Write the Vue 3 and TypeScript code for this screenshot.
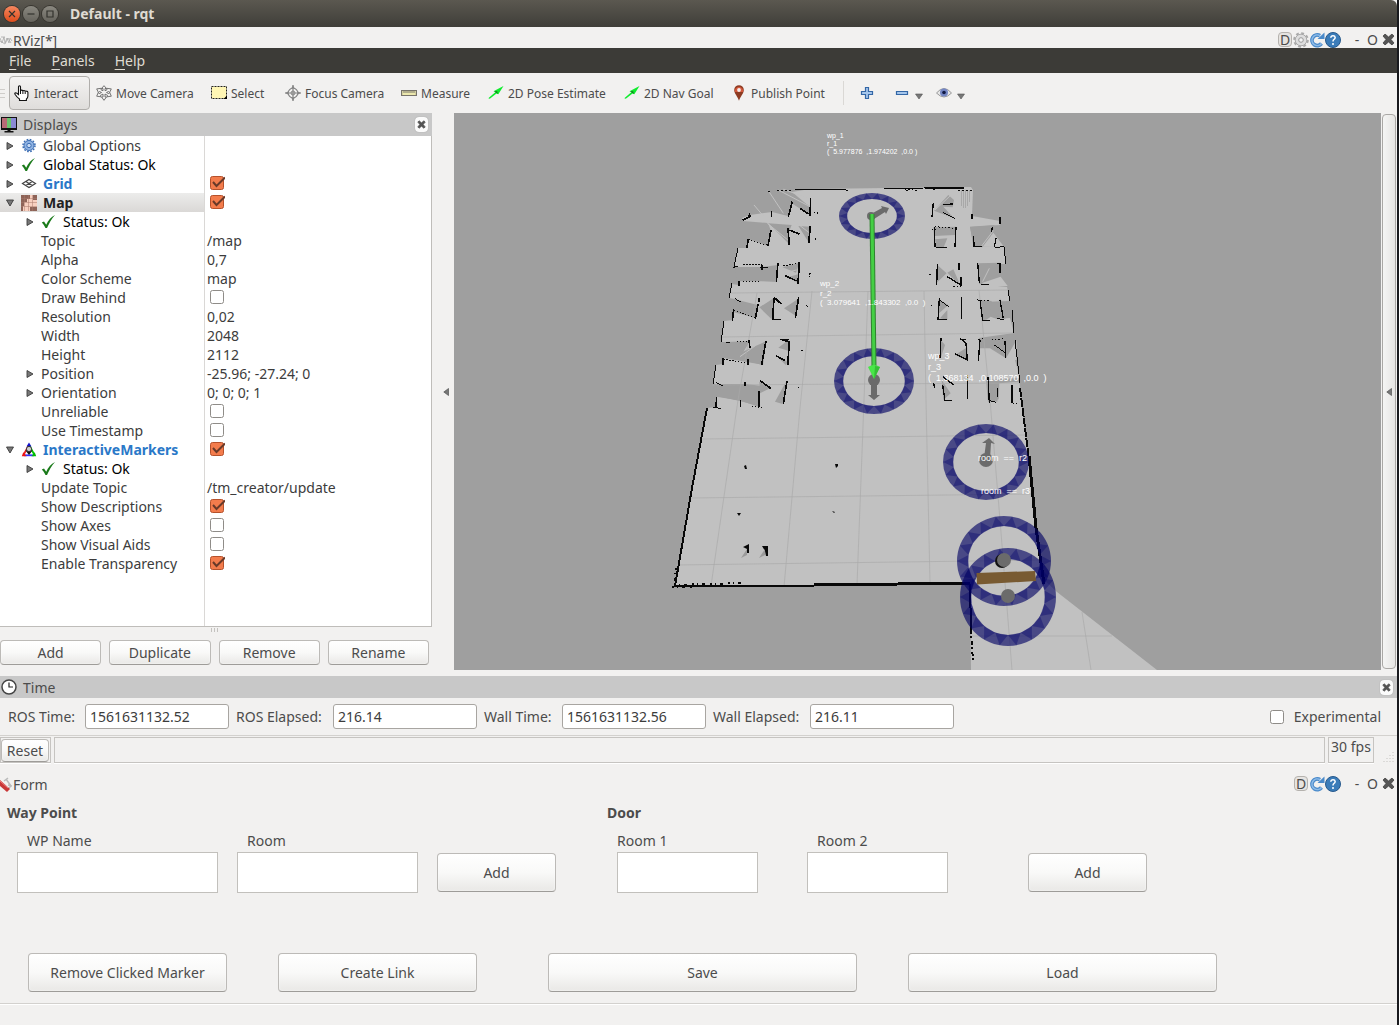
<script setup lang="ts">
import { ref } from 'vue'

interface Row {
  name: string
  depth: number
  arrow?: 'open' | 'closed'
  icon?: string
  tone?: string
  value?: string
  checked?: boolean
  selected?: boolean
}

const rows = ref<Row[]>([
  { name: 'Global Options', depth: 0, arrow: 'closed', icon: 'gear' },
  { name: 'Global Status: Ok', depth: 0, arrow: 'closed', icon: 'ok', tone: 'black' },
  { name: 'Grid', depth: 0, arrow: 'closed', icon: 'grid', tone: 'blue', checked: true },
  { name: 'Map', depth: 0, arrow: 'open', icon: 'map', tone: 'bold', checked: true, selected: true },
  { name: 'Status: Ok', depth: 1, arrow: 'closed', icon: 'ok', tone: 'black' },
  { name: 'Topic', depth: 1, value: '/map' },
  { name: 'Alpha', depth: 1, value: '0,7' },
  { name: 'Color Scheme', depth: 1, value: 'map' },
  { name: 'Draw Behind', depth: 1, checked: false },
  { name: 'Resolution', depth: 1, value: '0,02' },
  { name: 'Width', depth: 1, value: '2048' },
  { name: 'Height', depth: 1, value: '2112' },
  { name: 'Position', depth: 1, arrow: 'closed', value: '-25.96; -27.24; 0' },
  { name: 'Orientation', depth: 1, arrow: 'closed', value: '0; 0; 0; 1' },
  { name: 'Unreliable', depth: 1, checked: false },
  { name: 'Use Timestamp', depth: 1, checked: false },
  { name: 'InteractiveMarkers', depth: 0, arrow: 'open', icon: 'markers', tone: 'blue', checked: true },
  { name: 'Status: Ok', depth: 1, arrow: 'closed', icon: 'ok', tone: 'black' },
  { name: 'Update Topic', depth: 1, value: '/tm_creator/update' },
  { name: 'Show Descriptions', depth: 1, checked: true },
  { name: 'Show Axes', depth: 1, checked: false },
  { name: 'Show Visual Aids', depth: 1, checked: false },
  { name: 'Enable Transparency', depth: 1, checked: true },
])

const tools = [
  { id: 'hand', label: 'Interact' },
  { id: 'move', label: 'Move Camera' },
  { id: 'select', label: 'Select' },
  { id: 'focus', label: 'Focus Camera' },
  { id: 'measure', label: 'Measure' },
  { id: 'arrow', label: '2D Pose Estimate' },
  { id: 'arrow', label: '2D Nav Goal' },
  { id: 'pin', label: 'Publish Point' },
]

const times = [
  { id: 'ros-time', label: 'ROS Time:', value: '1561631132.52' },
  { id: 'ros-elapsed', label: 'ROS Elapsed:', value: '216.14' },
  { id: 'wall-time', label: 'Wall Time:', value: '1561631132.56' },
  { id: 'wall-elapsed', label: 'Wall Elapsed:', value: '216.11' },
]

interface Ring { cx: number; cy: number; rx: number; ry: number; ix: number; iy: number }

const ringShapes: Ring[] = [
  { cx: 872, cy: 216, rx: 33, ry: 23, ix: 25, iy: 17 },
  { cx: 874, cy: 381, rx: 40, ry: 33, ix: 31, iy: 25 },
  { cx: 986, cy: 462, rx: 43, ry: 38, ix: 33, iy: 29 },
  { cx: 1004, cy: 561, rx: 47, ry: 45, ix: 36, iy: 35 },
  { cx: 1008, cy: 597, rx: 48, ry: 49, ix: 37, iy: 38 },
]

const ellipse = (cx: number, cy: number, rx: number, ry: number) =>
  `M${cx - rx} ${cy}a${rx} ${ry} 0 1 0 ${rx * 2} 0a${rx} ${ry} 0 1 0 ${-rx * 2} 0z`

// Dark triangles with their base on the inner rim and their tip on the outer one
function wedges(r: Ring, count = 18): string {
  const at = (a: number, x: number, y: number) =>
    `${(r.cx + x * Math.cos(a)).toFixed(1)} ${(r.cy + y * Math.sin(a)).toFixed(1)}`
  let d = ''
  for (let i = 0; i < count; i++) {
    const a = (i * 2 * Math.PI) / count
    const half = Math.PI / count
    d += `M${at(a - half, r.ix, r.iy)}L${at(a + half, r.ix, r.iy)}L${at(a, r.rx, r.ry)}z`
  }
  return d
}

const rings = ringShapes.map((r) => ({
  band: ellipse(r.cx, r.cy, r.rx, r.ry) + ellipse(r.cx, r.cy, r.ix, r.iy),
  dark: wedges(r),
}))
</script>

<template>
  <svg class="defs" width="0" height="0" aria-hidden="true">
    <symbol id="i-gear" viewBox="0 0 16 16">
      <circle cx="8" cy="7.500" r="5" fill="#8fb3e3" stroke="#3c6eb4" />
      <circle cx="8" cy="7.500" r="6" fill="none" stroke="#3c6eb4" stroke-width="1.500" stroke-dasharray="1.700 1.440" />
      <circle cx="8" cy="7.500" r="2.200" fill="#c5d9f3" stroke="#3c6eb4" />
    </symbol>
    <symbol id="i-ok" viewBox="0 0 16 16">
      <path d="M.8 8.500l2.200-.9 2.200 3.200C7 6.500 10 3 14 1 10.500 5 8 9.500 6 14H4.500C3.500 12 2.300 10 .8 8.500z" fill="#1a7a1a" />
    </symbol>
    <symbol id="i-grid" viewBox="0 0 16 16">
      <path d="M8 3.500L14.500 7.500 8 11.500 1.500 7.500zM4.800 5.500l6.500 4M11.300 5.500l-6.500 4" fill="none" stroke="#444" stroke-width="1.200" />
    </symbol>
    <symbol id="i-map" viewBox="0 0 16 16">
      <path d="M0 0h16v16H0z" fill="#f8d0c0" />
      <path d="M0 0h9v4H6v3H3v4H2v5H0zM12 0h4v5h-4zM9 12h7v4H9z" fill="#8e6458" />
      <path d="M3.500 0v16M7.500 0v16M11.500 0v16M0 3.500h16M0 7.500h16M0 11.500h16" stroke="#a97a6c" stroke-opacity=".5" />
    </symbol>
    <symbol id="i-markers" viewBox="0 0 16 16">
      <path d="M8 3L3 12" stroke="#e22" stroke-width="1.800" /><path d="M8 3l5 9" stroke="#0c0" stroke-width="1.800" />
      <path d="M3 13.300h10" stroke="#33f" stroke-width="1.800" />
      <path d="M8 .5l2.500 4h-5z" fill="#11c" /><path d="M.8 14.200l1.500-4 3.200 4z" fill="#e11" /><path d="M15.200 14.200l-1.500-4-3.200 4z" fill="#0b0" />
      <path d="M4.500 8.500q3.500-1.500 7 0L8 13z" fill="#111" /><circle cx="8" cy="7" r="2.600" fill="#ccc" stroke="#222" stroke-width=".8" />
    </symbol>
    <symbol id="i-hand" viewBox="0 0 16 16">
      <path d="M4.500 9.500V1.800q0-1 1-1t1 1V6q.2-1 1.300-.9 1 .1 1 1 .3-.8 1.300-.6 1 .2 1 1 .3-.6 1.200-.4 1.600.2 1.600 1.200V11q0 2-1.500 3v1.500H5.500V14Q3 12.500 1 9.300q-.6-1.300.6-1.500 1.200 0 2.900 1.700z" fill="#fff" stroke="#111" stroke-width="1.100" />
      <path d="M6.500 6v3M8.900 6v3M11.200 6.500V9" stroke="#111" />
    </symbol>
    <symbol id="i-move" viewBox="0 0 16 16">
      <path d="M8 .7l2.500 2.800H9v2.200l2-.9-.3-1.500 4.600.6-1.800 3.700-1-1.100-2 1 2.300 1.200 1-1 1.500 3.500-4.300.6.500-1.500-2.500-1.200V12h1.500L8 15.300 5.500 12H7V9.100l-2.500 1.200.5 1.500-4.300-.6 1.500-3.500 1 1 2.300-1.200-2-1-1 1.100L.7 3.900l4.600-.6L5 4.800l2 .9V3.500H5.500z" fill="#f2f1f0" stroke="#666" stroke-width=".9" />
    </symbol>
    <symbol id="i-select" viewBox="0 0 16 16">
      <path d="M.5 1.500h15v12H.5z" fill="#fff6b4" stroke="#222" stroke-dasharray="2 1" />
      <path d="M16 10.500v3.500h-3.500z" fill="#000" />
    </symbol>
    <symbol id="i-focus" viewBox="0 0 16 16">
      <g fill="none" stroke="#858585"><circle cx="8" cy="8" r="4.800" stroke-width="1.200" /><circle cx="8" cy="8" r="2" />
        <path d="M8 0v16M0 8h16" stroke-width="1.200" /></g>
      <path d="M8 0l1.500 3h-3zM8 16l1.500-3h-3zM0 8l3-1.500v3zM16 8l-3-1.500v3z" fill="#858585" />
    </symbol>
    <symbol id="i-measure" viewBox="0 0 16 16">
      <path d="M.6 5.500h14.800v5H.6z" fill="#ece8ad" stroke="#77736a" stroke-width="1.200" />
      <path d="M3 6v2M5 6v2M7 6v2M9 6v2M11 6v2M13 6v2" stroke="#77736a" />
    </symbol>
    <symbol id="i-arrow" viewBox="0 0 16 16">
      <path d="M15.500 1L5.500 6.200 7.500 7 .3 13.300l1.500.5L8.500 8.500l1.800.8z" fill="#0fec2d" />
      <path d="M6 6.300l3.800 2.700-.6-2.800z" fill="#137a1c" />
    </symbol>
    <symbol id="i-pin" viewBox="0 0 16 16">
      <path d="M8 15.800C7 12 3.200 8.500 3.200 5a4.800 4.800 0 0 1 9.600 0C12.800 8.500 9 12 8 15.800z" fill="#8d3b22" />
      <path d="M3.800 7a4.300 4.300 0 1 1 8.400 0z" fill="#d3573a" /><circle cx="8" cy="5" r="1.900" fill="#f2eeee" />
    </symbol>
    <symbol id="i-refresh" viewBox="0 0 16 16">
      <path d="M12.500 11.500A5.300 5.300 0 1 1 11 3.700" fill="none" stroke="#4a8aca" stroke-width="3.800" />
      <path d="M8.500 7H15.500V.5z" fill="#4a8aca" /><path d="M12.500 11.500A5.300 5.300 0 1 1 11 3.700" fill="none" stroke="#8dbbe8" stroke-width="1.600" />
    </symbol>
    <symbol id="i-help" viewBox="0 0 16 16">
      <circle cx="8" cy="8" r="7.500" fill="#3b7cb9" stroke="#27598c" />
      <path d="M5.800 5.800Q6 3.800 8 3.800t2.200 1.800Q10.200 7 8.800 7.700 8 8.200 8 9.500" fill="none" stroke="#fff" stroke-width="1.500" /><circle cx="8" cy="12" r="1" fill="#fff" />
    </symbol>
    <symbol id="i-cog" viewBox="0 0 16 16">
      <circle cx="8" cy="8" r="6.800" fill="none" stroke="#aaa" stroke-width="2" stroke-dasharray="2.900 2.440" />
      <circle cx="8" cy="8" r="5.800" fill="#dedede" stroke="#aaa" /><circle cx="8" cy="8" r="2.300" fill="#f4f4f4" stroke="#999" />
    </symbol>
    <symbol id="i-x" viewBox="0 0 12 12">
      <path d="M1 2.800L2.800 1 6 3.700 9.200 1 11 2.800 8.300 6l2.700 3.200L9.200 11 6 8.300 2.800 11 1 9.200 3.700 6z" fill="#555" stroke="#444" stroke-width=".8" />
    </symbol>
  </svg>

  <div class="window">
    <header class="titlebar">
      <button class="wbtn close" aria-label="Close window"><svg viewBox="0 0 16 16"><path d="M5 5l6 6M11 5l-6 6" /></svg></button>
      <button class="wbtn" aria-label="Minimize window"><svg viewBox="0 0 16 16"><path d="M4.500 8h7" /></svg></button>
      <button class="wbtn" aria-label="Maximize window"><svg viewBox="0 0 16 16"><path d="M5 5h6v6H5z" /></svg></button>
      <h1>Default - rqt</h1>
    </header>

    <div class="dock">
      <svg class="dock-icon" viewBox="0 0 13 16"><path d="M0 5l2 5 2-6 1 6 2-5 2 5 1-5 2 3M0 8l5 3 3-6 3 5M1 4h4" fill="none" stroke="#aaa" stroke-width=".8" /></svg>
      <span>RViz[*]</span>
      <div class="dock-actions">
        <button class="d">D</button>
        <button aria-label="Settings"><svg class="i16"><use href="#i-cog" /></svg></button>
        <button aria-label="Reload"><svg class="i16"><use href="#i-refresh" /></svg></button>
        <button aria-label="Help"><svg class="i16"><use href="#i-help" /></svg></button>
        <button class="dash">-</button><button class="o">O</button>
        <button aria-label="Close"><svg class="i12"><use href="#i-x" /></svg></button>
      </div>
    </div>

    <nav class="menubar">
      <a href="#"><u>F</u>ile</a><a href="#"><u>P</u>anels</a><a href="#"><u>H</u>elp</a>
    </nav>

    <div class="toolbar">
      <div class="handle"></div>
      <div class="tools">
        <button v-for="(t, i) in tools" :key="t.label" class="tool" :class="{ active: i === 0 }">
          <svg class="i16"><use :href="'#i-' + t.id" /></svg><span>{{ t.label }}</span>
        </button>
      </div>
      <div class="extras">
        <button aria-label="Add tool"><svg width="14" height="14" viewBox="0 0 14 14"><path d="M5.500 1.500h3v4h4v3h-4v4h-3v-4h-4v-3h4z" fill="#a5c6ec" stroke="#3467a6" stroke-width="1.200" /></svg></button>
        <button aria-label="Remove tool"><svg width="28" height="14" viewBox="0 0 28 14"><path d="M1.500 5.500h11v3h-11z" fill="#a5c6ec" stroke="#3467a6" stroke-width="1.200" /><path d="M20.500 8h7L24 13z" fill="#777" stroke="#555" stroke-width=".6" /></svg></button>
        <button aria-label="Tool visibility"><svg width="29" height="14" viewBox="0 0 29 14"><path d="M.5 7q7.500-9 15 0-7.500 8-15 0z" fill="#e6e6e6" stroke="#999" /><circle cx="8" cy="6.500" r="4" fill="#7486c4" /><circle cx="8" cy="6.500" r="1.800" fill="#111a44" /><path d="M21.500 8h7L25 13z" fill="#777" stroke="#555" stroke-width=".6" /></svg></button>
      </div>
    </div>

    <main class="main">
      <section class="displays">
        <div class="panel-head">
          <svg class="i16" viewBox="0 0 16 16"><path d="M0 0h16v13H0z" fill="#111" /><path d="M1 1h5v10H1z" fill="#b76a76" /><path d="M6 1h4v10H6z" fill="#6bc46f" /><path d="M10 1h5v10h-5z" fill="#8a8ad4" /><path d="M6.500 12h3v2h3v1.500h-9V14h3z" fill="#111" /></svg>
          <h2>Displays</h2>
          <button class="panel-close" aria-label="Close Displays"><svg><use href="#i-x" /></svg></button>
        </div>
        <div class="tree">
          <table>
            <tbody>
              <tr v-for="(r, i) in rows" :key="i">
                <td class="name" :class="[r.tone, { sel: r.selected }]">
                  <div class="cell" :class="{ child: r.depth }">
                    <span class="twist"><svg v-if="r.arrow" width="8" height="8" viewBox="0 0 8 8"><path :d="r.arrow === 'open' ? 'M.5 1h7L4 7z' : 'M1 .5L7 4 1 7.500z'" fill="#777" stroke="#3c3c3c" stroke-width=".9" /></svg></span>
                    <span v-if="r.icon" class="ico"><svg class="i16"><use :href="'#i-' + r.icon" /></svg></span>
                    <label :for="'row' + i">{{ r.name }}</label>
                  </div>
                </td>
                <td class="value">
                  <input v-if="r.checked !== undefined" :id="'row' + i" v-model="r.checked" type="checkbox" class="check">
                  <template v-else>{{ r.value }}</template>
                </td>
              </tr>
            </tbody>
          </table>
        </div>
        <div class="grip"><i></i><i></i><i></i></div>
        <div class="panel-buttons">
          <button class="btn">Add</button><button class="btn">Duplicate</button><button class="btn">Remove</button><button class="btn">Rename</button>
        </div>
      </section>

      <div class="splitter"><svg width="6" height="8" viewBox="0 0 6 8"><path d="M5.500.5v7L.8 4z" fill="#777" stroke="#555" stroke-width=".7" /></svg></div>

      <svg class="view" viewBox="454 113 927 557" preserveAspectRatio="xMidYMid slice">
        <rect x="0" y="0" width="2000" height="1200" fill="#9f9f9f" />
        <!-- free space of the occupancy map -->
        <path fill="#c1c1c1" d="M810 189L971 187L973 190L972 216L1000 221V225L970 227L971 232L974 247L1004 246L1006 264L978 264L979 284L1007 287L1010 301L980 302L982 320L1010 318L1014 333L979 338L980 356L1015 360L1020 378L986 380L988 402L1020 394L1024 420L1030 460L1037 530L1044 580L1057 592L1157 670H971L970 583L674 587L707 408L716 407L717 396L740 401L759 406L760 390L771 387L746 384L720 386L713 383L716 365L723 364L724 358L747 361L763 365L766 342L748 356L742 354L750 341L727 342L721 342L724 321L733 320L733 312L756 318L758 306L741 303L735 299L729 298L732 284L738 285L739 280L762 281L777 282L778 265L762 267L734 267L738 248L747 248L748 239L768 246L771 231L768 223L743 221L742 218L750 215L772 212L788 216L792 200L809 212L810 207L792 192z" />
        <!-- unexplored pockets behind the shelves -->
        <g transform="translate(700 180) scale(.333333)" fill="#9f9f9f">
          <path d="M205 130L275 135L265 160V190zM295 138L330 140L328 190zM245 35L330 78L325 102L275 70zM248 262L298 248L288 278zM262 292L295 283L293 308zM178 382L222 354L215 418zM252 385L295 356L288 408zM235 503L265 480V512zM228 526L262 545L258 556zM225 665L258 605L248 672zM178 605L213 623L180 640z" />
          <path d="M105 265L232 262L228 304L110 304zM105 358L173 375L168 413L100 392zM68 488L148 485L128 515L198 484L188 554L72 534zM50 612L136 612L178 640L176 680L122 662L50 650z" />
        </g>
        <g transform="translate(660 110) scale(.333333)" fill="#9f9f9f">
          <path d="M822 302L865 255L882 270L878 292L850 290L882 325zM820 352L888 350L885 375L822 378zM825 388L862 385L850 414L828 410zM832 465L860 490L830 518zM862 488L880 478L902 528zM835 568L865 585L837 610zM840 625L862 600V630zM842 690L855 705L843 742zM885 735L922 712V752zM845 810L872 850L850 870zM983 815L1015 828L1012 875L988 870zM995 712L1036 692V742zM1020 565L1036 600V628L1012 618z" />
          <path d="M930 350L1003 345L1000 365L968 412L940 408zM952 460L1020 458L1022 495L958 520zM960 570L995 573L990 615L968 632z" />
        </g>
        <!-- openings between the right-hand shelves -->
        <g transform="translate(660 110) scale(.333333)" fill="#c1c1c1">
          <path d="M1000 368L1032 410H968zM1022 500L1043 528H962L968 518zM992 620L1045 640H965zM955 750H1070V690L1038 745L990 715H955zM1018 820L1078 815L1088 890H1015z" />
        </g>
        <!-- ray traces -->
        <g transform="translate(660 110) scale(.333333)" fill="none" stroke="#c1c1c1" stroke-width="3">
          <path d="M325 242L370 310M355 240L450 290M370 238L455 268M282 285L310 318M322 340L390 395M385 320L450 370M240 740L285 708M825 300L870 258M965 408L1000 362M968 515L988 475M360 480L400 485M365 490L410 480" />
        </g>
        <path d="M961 190v16M963 190v18M965 190v18M967 190v16M969 190v12" stroke="#a8a8a8" shape-rendering="crispEdges" />
        <!-- reference grid -->
        <g fill="none" stroke="#a9a9a9" stroke-opacity=".65">
          <path d="M730 293L1009 290M721 337L1014 333M712 385L1020 383M702 439L1028 435M690 498L1034 494M676 565L1050 560M972 636H1112" />
          <path d="M757 293L738 400L711 586M812 291L800 408L784 587M868 291L864 400L857 585M924 291L926 400L930 583M979 290L990 400L1000 520L1012 670M1082 612L1091 670" />
        </g>
        <!-- walls -->
        <g fill="none" stroke="#080808" shape-rendering="crispEdges">
          <path d="M795 189.500H846M884 188.500L964 187.500" stroke-width="1" /><path d="M925 187.500H964" stroke-width="2" />
          <path d="M768 191h4M777 190h14M846 190h4M906 190h2M915 190h2M958 190h14" stroke-width="1" stroke-dasharray="2 2" />
          <path d="M707 408L692 488L675 586" stroke-width="2" />
          <path d="M674 586L722 586L814 585.500" stroke-width="2" /><path d="M814 585L898 584L970 583" stroke-width="3" />
          <path d="M674 585L745 583M672 587h20M676 568l-2 18" stroke-width="2" stroke-dasharray="2 3 1 4 3 5" />
          <path d="M1020 388L1029 460" stroke-width="2" stroke-dasharray="9 1" /><path d="M1029 456L1036 528L1044 584" stroke-width="3" />
          <path d="M970 584L971 630" stroke-width="2" /><path d="M971 630L973 662" stroke-width="2" stroke-dasharray="4 2 2 3" />
          <path d="M738 248L734 267M732 283L729 298M724 321L721 342M716 365L713 384M1004 247L1006 264M1008 290L1010 301M1012 310L1014 333M1015 340L1020 383" stroke-width="1" />
        </g>
        <g transform="translate(700 180) scale(.333333)" fill="none" stroke="#080808" stroke-width="5" shape-rendering="crispEdges">
          <path d="M277 65L265 110M332 55L330 108M300 85L325 102M215 92v18M150 100l-5 12M128 120l25-12M213 150L204 198M145 177l-4 26M264 145l4 50M268 150l30 12M331 138L326 190M234 248L229 306M298 247L294 312M254 286L290 303M187 255l-2 14M118 302v15M178 353l-2 12M174 372L166 418M101 388l-4 35M222 352L245 373M222 354L218 418M296 352L286 415M198 482L185 555M147 480l3 25M144 538v17M70 535l-2 20M246 480L268 485L263 556M228 527L255 542M180 602L212 625M261 602L250 672M176 632L178 682M136 605v12M50 650l-2 33M122 660v20" />
          <path stroke-width="3" d="M205 262h-25M100 263l15-5M105 356l18 10M215 420h28M78 488h12M48 608l20 10M38 682l25 3M240 480h28" />
          <path stroke-width="3" stroke-dasharray="4 5" d="M110 484h36M130 254h55M250 258l48-10M155 680l33 2M128 305l55-2M102 390l65 25M145 178l58 18M70 537l70 12M350 98l7 3M345 178h6M330 280v10M319 374v10M302 513h7M295 620v10" />
        </g>
        <g transform="translate(660 110) scale(.333333)" fill="none" stroke="#080808" stroke-width="4" shape-rendering="crispEdges">
          <path d="M820 278L816 320M850 283L880 284M850 308L884 325M823 352L825 412M888 350L885 410M936 312v16M1020 320v22M832 462L830 525M862 500L902 525M897 460v20M903 500v28M953 458L958 520M1020 458v30M960 570L968 632M838 565l-4 65M904 562v65M1020 570l10 55M843 685L840 745M885 732L920 748M900 685L918 700L922 752M960 690l-5 64M1035 692l2 52M848 800L882 825M848 825L855 872M923 795V868M984 800L988 878M1056 825V878M820 820l5 12M1012 835v25M940 378L943 412M997 352l-3 15M1008 385l-5 26" />
          <path stroke-width="3" d="M828 413h32M870 282h10M940 410h25M1005 412l28-2M1010 462l12-3M962 522l25 3M833 628h28M968 632h22M1012 625l20 5M838 570l28 20M905 690h12M855 870l22 3M988 872l20 5M1002 705l33 22" />
          <path stroke-width="3" stroke-dasharray="4 6" d="M735 240h30M820 240h4M808 493h7M815 584v10M825 350l60 5M952 570l40 3M475 308h-12M468 386h-8M452 492h-7M442 588v6M425 722h5M955 690l20-5M995 690l40-5M880 530h22M815 358h12M1058 880h12" />
        </g>
        <!-- isolated obstacles -->
        <path d="M744 466l2-1 1 4h-2zM835 464h3v2l-2 2zM737 513h4l-2 3zM832 511l3 1-1 1zM743 547l6-3v9h-2v-4zM762 546h6v10h-2l-1-5z" fill="#080808" />
        <path d="M747 549v6l-6 3zM765 549v6l-6 3z" fill="#9a9a9a" />
        <!-- interactive rings -->
        <g v-for="(r, i) in rings" :key="i">
          <path :d="r.band" fill="#000062" fill-opacity=".62" fill-rule="evenodd" />
          <path :d="r.dark" fill="#000069" fill-opacity=".35" />
        </g>
        <!-- waypoint arrows -->
        <g fill="#6b6b6b">
          <circle cx="871" cy="216" r="4" /><path d="M871 214L882 208L881 206L889 208L886 214L885 212L874 219z" />
          <circle cx="874" cy="380" r="6" /><path d="M871 380h6v15h3l-6 5-6-5h3z" />
          <circle cx="986" cy="460" r="7" /><path d="M984 458l2-15h-4l7-5 6 6-4-1-1 16z" />
          <circle cx="1002" cy="561" r="7" fill="#111" /><circle cx="1004" cy="560" r="7" /><circle cx="1008" cy="596" r="7" />
        </g>
        <path d="M976.500 573L1035 571L1036 581L977 584.500z" fill="#785a32" />
        <!-- link between waypoints -->
        <path d="M869.500 214h5l2 155h-5z" fill="#2e832e" /><path d="M870.500 214h3l2 155h-3z" fill="#44cf44" />
        <path d="M868 367q6-4 12 0l-6 12z" fill="#48e648" /><path d="M875 366l5 1-6 12z" fill="#35bf35" />
        <g fill="#fff" font-family="'Liberation Sans', sans-serif">
          <g font-size="7"><text x="827" y="138">wp_1</text><text x="827" y="146">r_1</text><text x="827" y="154">(&nbsp; 5.977876&nbsp; ,1.974202&nbsp; ,0.0 )</text></g>
          <g font-size="8"><text x="820" y="286">wp_2</text><text x="820" y="296">r_2</text><text x="820" y="305">(&nbsp; 3.079641&nbsp; ,1.843302&nbsp; ,0.0&nbsp; )</text></g>
          <g font-size="9"><text x="928" y="359">wp_3</text><text x="928" y="370">r_3</text><text x="928" y="381">(&nbsp; 1.368134&nbsp; ,0.108570&nbsp; ,0.0&nbsp; )</text>
            <text x="978" y="461">room&nbsp; ==&nbsp; r2</text><text x="981" y="494">room&nbsp; ==&nbsp; r3</text></g>
        </g>
      </svg>

      <div class="side-handle"><div><svg width="6" height="8" viewBox="0 0 6 8"><path d="M5.500.5v7L.8 4z" fill="#777" stroke="#555" stroke-width=".7" /></svg></div></div>
    </main>

    <section class="time">
      <div class="panel-head">
        <svg class="i16" viewBox="0 0 16 16"><circle cx="8" cy="8" r="7" fill="#fff" stroke="#444" stroke-width="1.500" /><path d="M8 3.500V8h4" fill="none" stroke="#222" stroke-width="1.200" /></svg>
        <h2>Time</h2>
        <button class="panel-close" aria-label="Close Time"><svg><use href="#i-x" /></svg></button>
      </div>
      <div class="time-row">
        <template v-for="t in times" :key="t.id">
          <label :for="t.id">{{ t.label }}</label>
          <input :id="t.id" type="text" :value="t.value" readonly>
        </template>
        <label class="exp"><input type="checkbox" class="check">Experimental</label>
      </div>
    </section>

    <div class="status">
      <div class="reset-box"><button class="btn">Reset</button></div>
      <div class="message"></div>
      <div class="fps">30 fps</div>
      <svg width="12" height="12" viewBox="0 0 12 12"><path d="M10 1v11M7 4v8M4 7v5M1 10v2" stroke="#c4c2bf" stroke-dasharray="1 2" /></svg>
    </div>

    <div class="dock form-dock">
      <svg class="dock-icon" viewBox="0 0 13 16"><path d="M4 4l4-3M8 8l4 1M6 2l5 7-4 4" fill="none" stroke="#bbb" stroke-width="1.500" /><path d="M0 3l10 9-3 3-7-6z" fill="#c83737" /><path d="M0 4l8 7" stroke="#ef8080" /></svg>
      <span>Form</span>
      <div class="dock-actions">
        <button class="d">D</button>
        <button aria-label="Reload"><svg class="i16"><use href="#i-refresh" /></svg></button>
        <button aria-label="Help"><svg class="i16"><use href="#i-help" /></svg></button>
        <button class="dash">-</button><button class="o">O</button>
        <button aria-label="Close"><svg class="i12"><use href="#i-x" /></svg></button>
      </div>
    </div>

    <form class="form" @submit.prevent>
      <div class="groups">
        <section class="waypoint">
          <h3>Way Point</h3>
          <div class="fields">
            <label class="f200"><span>WP Name</span><textarea></textarea></label>
            <label class="f180"><span>Room</span><textarea></textarea></label>
            <button class="btn">Add</button>
          </div>
        </section>
        <section class="door">
          <h3>Door</h3>
          <div class="fields">
            <label class="f140 flush"><span>Room 1</span><textarea></textarea></label>
            <label class="f140"><span>Room 2</span><textarea></textarea></label>
            <button class="btn">Add</button>
          </div>
        </section>
      </div>
      <div class="actions">
        <button class="btn">Remove Clicked Marker</button>
        <button class="btn">Create Link</button>
        <button class="btn">Save</button>
        <button class="btn">Load</button>
      </div>
    </form>
    <footer class="foot"></footer>
  </div>
</template>

<style>
body { margin: 0; background: #f2f1f0; }
</style>

<style scoped>
* { box-sizing: border-box; }
.defs { position: absolute; }
.window {
  display: flex; flex-direction: column; min-height: 100vh;
  border-right: 2px solid #191a1e; background: #f2f1f0; color: #4c4c4c;
  font: 14px/19px "Noto Sans", sans-serif;
}
button { padding: 0; border: 0; background: none; font: inherit; color: inherit; }
h1, h2, h3 { margin: 0; font-size: 14px; line-height: 19px; }
svg { display: block; flex: none; }
.i16 { width: 16px; height: 16px; }
.i12 { width: 13px; height: 13px; }

.titlebar {
  display: flex; align-items: center; gap: 3px; height: 27px; padding-left: 4px;
  background: linear-gradient(#5b5850, #3f3e39); color: #dfdbd2; border-radius: 0 6px 0 0;
}
.titlebar h1 { margin-left: 9px; }
.wbtn { width: 16px; height: 16px; border-radius: 50%; background: linear-gradient(#8a8880, #66645d); box-shadow: 0 0 0 1px #37352f; }
.wbtn svg { fill: none; stroke: #33322d; stroke-width: 1.2; }
.wbtn.close { background: linear-gradient(#f5875f, #df4d1c); }

.dock { display: flex; align-items: center; height: 21px; padding-top: 6px; }
.dock-icon { width: 13px; height: 16px; }
.dock-actions { display: flex; align-items: center; margin: -2px 0 0 auto; padding-right: 2px; }
.dock-actions .d { width: 14px; height: 15px; margin-right: 1px; border: 1px solid #b5b2ae; border-radius: 4px; background: #e6e4e1; line-height: 14px; }
.dock-actions .dash { width: 8px; margin-left: 12px; }
.dock-actions .o { width: 21px; padding-left: 2px; }

.menubar { display: flex; gap: 2px; height: 25px; align-items: center; background: #3c3b37; }
.menubar a { padding: 0 9px; color: #dfdbd2; text-decoration: none; }
.menubar u { text-underline-offset: 3px; }

.toolbar { display: flex; align-items: center; height: 40px; font-size: 12px; }
.handle { width: 5px; height: 9px; margin-right: 4px; background: repeating-linear-gradient(#cfcdca 0 1px, transparent 1px 4px); }
.tools { display: grid; grid-template-columns: 87px 115px 74px 116px 87px 136px 107px 112px; align-items: center; }
.tool { display: flex; align-items: center; gap: 4px; height: 34px; white-space: nowrap; }
.tool.active { margin-right: 6px; padding-left: 4px; border: 1px solid #b0aeab; border-radius: 4px; background: linear-gradient(#f4f3f2, #dfdddb); }
.extras { display: flex; align-items: center; gap: 13px; height: 24px; padding-left: 16px; border-left: 1px solid #dad8d5; }
.extras button:first-child { margin-right: 8px; }

.main { display: flex; height: 557px; }
.displays { display: flex; flex-direction: column; width: 432px; flex: none; }
.panel-head { display: flex; align-items: center; gap: 6px; height: 23px; padding: 0 4px 0 1px; background: #c8c8c8; }
.panel-head h2 { font-weight: 400; }
.panel-close { display: grid; place-items: center; width: 13px; height: 15px; margin-left: auto; border-radius: 4px; background: #fbfbfb; box-shadow: 0 0 1px #8d8d8d; }
.panel-close svg { width: 9px; height: 9px; }
.tree { flex: 1; overflow: hidden; border: solid #bfbdba; border-width: 0 1px 1px 0; background: linear-gradient(90deg, #fff 204px, #dad8d6 204px, #dad8d6 205px, #fff 205px); }
table { width: 100%; border-collapse: collapse; table-layout: fixed; }
td { height: 19px; padding: 0; color: #3c3c3c; }
.name { width: 204px; }
.value { padding-left: 3px; }
.cell { display: flex; align-items: center; height: 19px; padding-left: 6px; white-space: nowrap; }
.cell.child { padding-left: 26px; }
.twist { width: 15px; }
.ico { width: 16px; margin-right: 6px; }
.black { color: #000; }
.blue { color: #2a78c8; font-weight: 700; }
.bold { color: #222; font-weight: 700; }
.sel { background: linear-gradient(#ececeb, #dad8d6); }
.check {
  display: block; appearance: none; width: 16px; height: 16px; margin: 0 0 2px 2px;
  background: url("data:image/svg+xml,%3Csvg xmlns='http://www.w3.org/2000/svg' width='16' height='16'%3E%3Crect x='1.500' y='1.500' width='13' height='13' rx='2' fill='%23fff' stroke='%238f8c88'/%3E%3C/svg%3E") no-repeat;
}
.check:checked {
  background-image: url("data:image/svg+xml,%3Csvg xmlns='http://www.w3.org/2000/svg' width='16' height='16'%3E%3Crect x='1.500' y='1.500' width='13' height='13' rx='2' fill='%23f37c4c' stroke='%23b5512b'/%3E%3Cpath d='M4 7l3.500 4 8.500-8.500' fill='none' stroke='%23693a29' stroke-width='2'/%3E%3C/svg%3E");
}
.grip { display: flex; justify-content: center; gap: 2px; height: 13px; padding: 1px 4px 0 0; }
.grip i { width: 1px; height: 4px; background: #c4c2bf; }
.panel-buttons { display: grid; grid-template-columns: repeat(4, 1fr); gap: 8px; padding: 0 3px 5px 0; }
.btn {
  height: 25px; border: 1px solid #bcbab7; border-bottom-color: #9e9c99; border-radius: 4px;
  background: linear-gradient(#fff, #f9f9f8 50%, #e9e8e6); box-shadow: inset 0 0 2px #fff;
}
.splitter { display: flex; align-items: center; justify-content: center; width: 22px; padding-left: 6px; }
.view { flex: 1; min-width: 0; height: 557px; }
.side-handle { width: 16px; padding: 1px; }
.side-handle div { display: flex; align-items: center; justify-content: center; height: 100%; border: 1px solid #aaa8a5; border-radius: 4px; background: linear-gradient(90deg, #f5f5f4, #e6e5e3); }

.time { margin-top: 6px; border-bottom: 1px solid #d3d1ce; }
.time .panel-head { height: 22px; }
.time-row { display: grid; grid-template-columns: 70px 144px 90px 144px 71px 144px 90px 144px 1fr; column-gap: 7px; align-items: center; height: 37px; padding: 0 16px 0 8px; white-space: nowrap; }
.time-row input[type="text"] { width: 100%; height: 25px; padding: 0 4px; border: 1px solid #a8a5a1; border-radius: 3px; background: #fff; color: #3c3c3c; font: inherit; }
.exp { display: flex; justify-content: flex-end; align-items: center; gap: 9px; }
.exp .check { margin: 0; }

.status { display: flex; align-items: flex-start; gap: 3px; height: 29px; padding-top: 1px; }
.status > div { height: 26px; border: 1px solid #c6c4c1; box-shadow: 0 1px #fff; }
.reset-box { width: 51px; padding-top: 1px; }
.reset-box .btn { display: block; width: 48px; height: 23px; }
.message { flex: 1; }
.fps { width: 46px; line-height: 18px; text-align: center; white-space: nowrap; }
.status > svg { margin: 14px 2px 0 6px; }

.form-dock { height: 29px; padding-top: 10px; }
.form { padding-top: 9px; }
.groups { display: flex; }
.waypoint { width: 600px; padding-left: 7px; }
.door { width: 600px; padding-left: 7px; }
.fields { display: flex; align-items: flex-end; gap: 19px; padding: 9px 0 0 10px; }
.fields label { display: block; }
.fields span { display: block; height: 21px; padding-left: 10px; }
.fields .flush span { padding-left: 0; }
textarea { display: block; width: 100%; height: 41px; resize: none; border: 1px solid #c2c0bc; background: #fff; font: inherit; }
.f200 { width: 201px; }
.f180 { width: 181px; }
.f140 { width: 141px; }
.door .fields { gap: 49px; }
.door .btn { margin-left: 31px; }
.fields .btn { width: 119px; height: 39px; margin-bottom: 1px; }
.actions { display: grid; grid-template-columns: 199px 199px 309px 309px; column-gap: 51px; padding: 60px 0 11px 28px; }
.actions .btn { height: 39px; }
.actions .btn:nth-child(n + 3) { margin: 0 -20px 0 20px; }
.foot { flex: 1; border-top: 1px solid #d3d1ce; box-shadow: inset 0 1px #fff; }
</style>
